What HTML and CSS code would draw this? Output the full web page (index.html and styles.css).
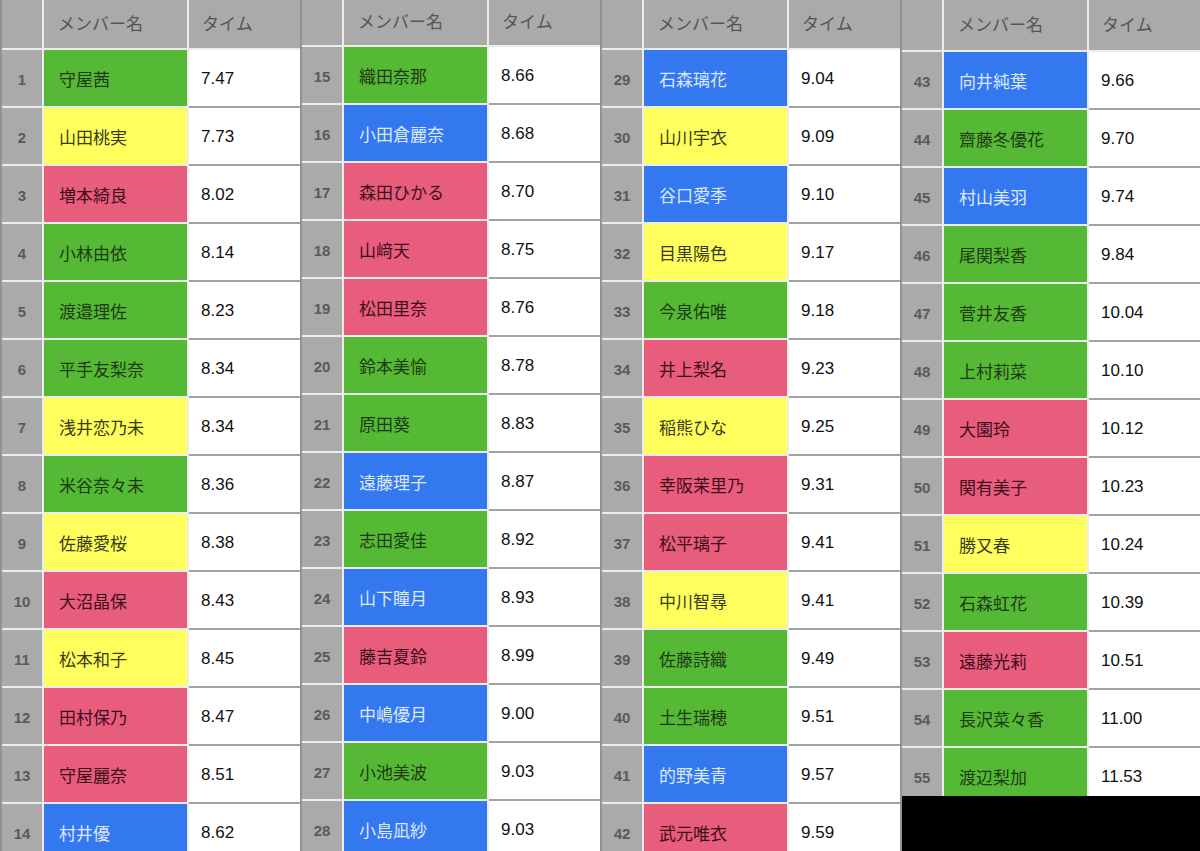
FILE: index.html
```html
<!DOCTYPE html>
<html lang="ja">
<head>
<meta charset="utf-8">
<title>タイム</title>
<link rel="stylesheet" href="styles.css">
</head>
<body>
<div class="page">
  <section class="panel panel-1">
    <div class="head"><div class="c-num"></div><div class="c-name">メンバー名</div><div class="c-time">タイム</div></div>
    <div class="row"><div class="c-num">1</div><div class="c-name g">守屋茜</div><div class="c-time">7.47</div></div>
    <div class="row"><div class="c-num">2</div><div class="c-name y">山田桃実</div><div class="c-time">7.73</div></div>
    <div class="row"><div class="c-num">3</div><div class="c-name p">増本綺良</div><div class="c-time">8.02</div></div>
    <div class="row"><div class="c-num">4</div><div class="c-name g">小林由依</div><div class="c-time">8.14</div></div>
    <div class="row"><div class="c-num">5</div><div class="c-name g">渡邉理佐</div><div class="c-time">8.23</div></div>
    <div class="row"><div class="c-num">6</div><div class="c-name g">平手友梨奈</div><div class="c-time">8.34</div></div>
    <div class="row"><div class="c-num">7</div><div class="c-name y">浅井恋乃未</div><div class="c-time">8.34</div></div>
    <div class="row"><div class="c-num">8</div><div class="c-name g">米谷奈々未</div><div class="c-time">8.36</div></div>
    <div class="row"><div class="c-num">9</div><div class="c-name y">佐藤愛桜</div><div class="c-time">8.38</div></div>
    <div class="row"><div class="c-num">10</div><div class="c-name p">大沼晶保</div><div class="c-time">8.43</div></div>
    <div class="row"><div class="c-num">11</div><div class="c-name y">松本和子</div><div class="c-time">8.45</div></div>
    <div class="row"><div class="c-num">12</div><div class="c-name p">田村保乃</div><div class="c-time">8.47</div></div>
    <div class="row"><div class="c-num">13</div><div class="c-name p">守屋麗奈</div><div class="c-time">8.51</div></div>
    <div class="row"><div class="c-num">14</div><div class="c-name b">村井優</div><div class="c-time">8.62</div></div>
  </section>
  <section class="panel panel-2">
    <div class="head"><div class="c-num"></div><div class="c-name">メンバー名</div><div class="c-time">タイム</div></div>
    <div class="row"><div class="c-num">15</div><div class="c-name g">織田奈那</div><div class="c-time">8.66</div></div>
    <div class="row"><div class="c-num">16</div><div class="c-name b">小田倉麗奈</div><div class="c-time">8.68</div></div>
    <div class="row"><div class="c-num">17</div><div class="c-name p">森田ひかる</div><div class="c-time">8.70</div></div>
    <div class="row"><div class="c-num">18</div><div class="c-name p">山﨑天</div><div class="c-time">8.75</div></div>
    <div class="row"><div class="c-num">19</div><div class="c-name p">松田里奈</div><div class="c-time">8.76</div></div>
    <div class="row"><div class="c-num">20</div><div class="c-name g">鈴本美愉</div><div class="c-time">8.78</div></div>
    <div class="row"><div class="c-num">21</div><div class="c-name g">原田葵</div><div class="c-time">8.83</div></div>
    <div class="row"><div class="c-num">22</div><div class="c-name b">遠藤理子</div><div class="c-time">8.87</div></div>
    <div class="row"><div class="c-num">23</div><div class="c-name g">志田愛佳</div><div class="c-time">8.92</div></div>
    <div class="row"><div class="c-num">24</div><div class="c-name b">山下瞳月</div><div class="c-time">8.93</div></div>
    <div class="row"><div class="c-num">25</div><div class="c-name p">藤吉夏鈴</div><div class="c-time">8.99</div></div>
    <div class="row"><div class="c-num">26</div><div class="c-name b">中嶋優月</div><div class="c-time">9.00</div></div>
    <div class="row"><div class="c-num">27</div><div class="c-name g">小池美波</div><div class="c-time">9.03</div></div>
    <div class="row"><div class="c-num">28</div><div class="c-name b">小島凪紗</div><div class="c-time">9.03</div></div>
  </section>
  <section class="panel panel-3">
    <div class="head"><div class="c-num"></div><div class="c-name">メンバー名</div><div class="c-time">タイム</div></div>
    <div class="row"><div class="c-num">29</div><div class="c-name b">石森璃花</div><div class="c-time">9.04</div></div>
    <div class="row"><div class="c-num">30</div><div class="c-name y">山川宇衣</div><div class="c-time">9.09</div></div>
    <div class="row"><div class="c-num">31</div><div class="c-name b">谷口愛季</div><div class="c-time">9.10</div></div>
    <div class="row"><div class="c-num">32</div><div class="c-name y">目黒陽色</div><div class="c-time">9.17</div></div>
    <div class="row"><div class="c-num">33</div><div class="c-name g">今泉佑唯</div><div class="c-time">9.18</div></div>
    <div class="row"><div class="c-num">34</div><div class="c-name p">井上梨名</div><div class="c-time">9.23</div></div>
    <div class="row"><div class="c-num">35</div><div class="c-name y">稲熊ひな</div><div class="c-time">9.25</div></div>
    <div class="row"><div class="c-num">36</div><div class="c-name p">幸阪茉里乃</div><div class="c-time">9.31</div></div>
    <div class="row"><div class="c-num">37</div><div class="c-name p">松平璃子</div><div class="c-time">9.41</div></div>
    <div class="row"><div class="c-num">38</div><div class="c-name y">中川智尋</div><div class="c-time">9.41</div></div>
    <div class="row"><div class="c-num">39</div><div class="c-name g">佐藤詩織</div><div class="c-time">9.49</div></div>
    <div class="row"><div class="c-num">40</div><div class="c-name g">土生瑞穂</div><div class="c-time">9.51</div></div>
    <div class="row"><div class="c-num">41</div><div class="c-name b">的野美青</div><div class="c-time">9.57</div></div>
    <div class="row"><div class="c-num">42</div><div class="c-name p">武元唯衣</div><div class="c-time">9.59</div></div>
  </section>
  <section class="panel panel-4">
    <div class="head"><div class="c-num"></div><div class="c-name">メンバー名</div><div class="c-time">タイム</div></div>
    <div class="row"><div class="c-num">43</div><div class="c-name b">向井純葉</div><div class="c-time">9.66</div></div>
    <div class="row"><div class="c-num">44</div><div class="c-name g">齋藤冬優花</div><div class="c-time">9.70</div></div>
    <div class="row"><div class="c-num">45</div><div class="c-name b">村山美羽</div><div class="c-time">9.74</div></div>
    <div class="row"><div class="c-num">46</div><div class="c-name g">尾関梨香</div><div class="c-time">9.84</div></div>
    <div class="row"><div class="c-num">47</div><div class="c-name g">菅井友香</div><div class="c-time">10.04</div></div>
    <div class="row"><div class="c-num">48</div><div class="c-name g">上村莉菜</div><div class="c-time">10.10</div></div>
    <div class="row"><div class="c-num">49</div><div class="c-name p">大園玲</div><div class="c-time">10.12</div></div>
    <div class="row"><div class="c-num">50</div><div class="c-name p">関有美子</div><div class="c-time">10.23</div></div>
    <div class="row"><div class="c-num">51</div><div class="c-name y">勝又春</div><div class="c-time">10.24</div></div>
    <div class="row"><div class="c-num">52</div><div class="c-name g">石森虹花</div><div class="c-time">10.39</div></div>
    <div class="row"><div class="c-num">53</div><div class="c-name p">遠藤光莉</div><div class="c-time">10.51</div></div>
    <div class="row"><div class="c-num">54</div><div class="c-name g">長沢菜々香</div><div class="c-time">11.00</div></div>
    <div class="row"><div class="c-num">55</div><div class="c-name g">渡辺梨加</div><div class="c-time">11.53</div></div>
    <div class="redact"></div>
  </section>
</div>
</body>
</html>
```

FILE: styles.css
```css
* { box-sizing: border-box; }
html, body { margin: 0; padding: 0; background: #ffffff; }
body {
  font-family: "Liberation Sans", "Noto Sans CJK JP", sans-serif;
  width: 1200px;
  height: 851px;
  overflow: hidden;
}
.page {
  display: flex;
  width: 1200px;
  height: 851px;
  overflow: hidden;
}
.panel {
  position: relative;
  width: 300px;
  flex: 0 0 300px;
  height: 851px;
  overflow: hidden;
  border-left: 2px solid #939393;
  background: #ffffff;
}
.head, .row {
  display: grid;
  grid-template-columns: 40px 143px 1fr;
  column-gap: 2px;
  padding-bottom: 2px;
  background: #ececec;
}
.head { height: 50px; }
.panel-2 .head { height: 47px; }
.panel-4 .head { height: 52px; }
.head > div {
  background: #aaaaaa;
  color: #565656;
  font-size: 17px;
  display: flex;
  align-items: center;
  padding-bottom: 4px;
}
.head .c-name { padding-left: 14px; }
.head .c-time { padding-left: 13px; }
.row { height: 58px; }
.c-num {
  background: #aaaaaa;
  color: #5a5a5a;
  font-weight: bold;
  font-size: 15px;
  display: flex;
  align-items: center;
  justify-content: center;
  padding-top: 3px;
}
.row .c-name {
  display: flex;
  align-items: center;
  padding-left: 15px;
  font-size: 17px;
}
.row .c-time {
  display: flex;
  align-items: center;
  padding-left: 12px;
  padding-top: 2px;
  font-size: 17px;
  color: #111111;
  background: #ffffff;
  box-shadow: 0 2px 0 #a2a2a2;
}
.g { background: #56b936; color: #1d3a12; }
.y { background: #fefe5c; color: #3a3a1a; }
.p { background: #e85c7c; color: #3e0d1c; }
.b { background: #3478ef; color: #dde9ff; }
.redact {
  position: absolute;
  left: -2px;
  top: 796px;
  width: 302px;
  height: 60px;
  background: #000000;
}
```
